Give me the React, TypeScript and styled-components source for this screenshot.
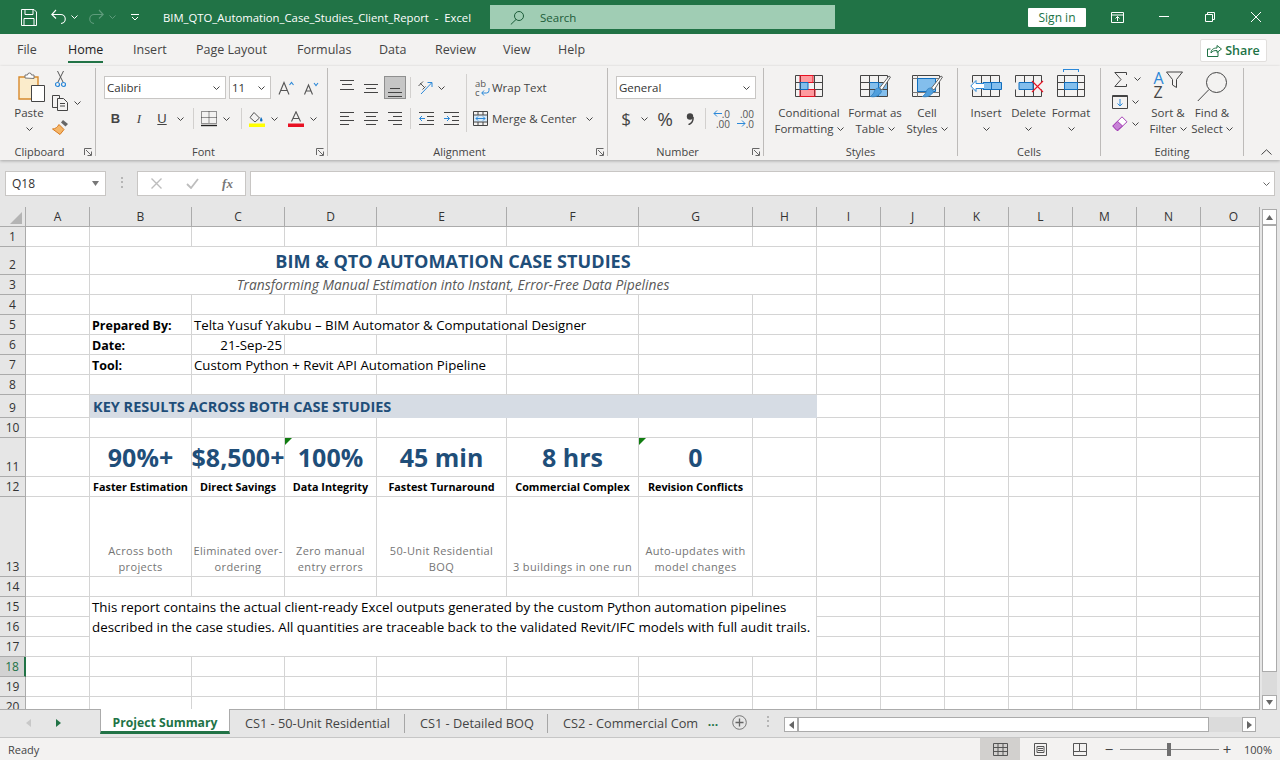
import React from "react";
import styled, { createGlobalStyle } from "styled-components";

const GlobalStyle = createGlobalStyle`
  html, body { margin: 0; padding: 0; background: #e6e6e6; }
  * { box-sizing: border-box; }
  #root { width: 1280px; height: 760px; overflow: hidden; }
`;

const uiFont = `"Open Sans", "Noto Sans", Arial, sans-serif`;

const Page = styled.div`
  width: 1280px;
  height: 760px;
  display: flex;
  flex-direction: column;
  font-family: ${uiFont};
  font-size: 11.5px;
  color: #444;
`;

// ---- title bar
const TitleBar = styled.div`
  height: 34px;
  background: #217346;
  display: flex;
  align-items: center;
  color: #fff;
`;
const QuickSlot = styled.div<{ $w: number; $ml?: number }>`
  width: ${(p) => p.$w}px;
  margin-left: ${(p) => p.$ml || 0}px;
  display: flex;
  justify-content: center;
  align-items: center;
  flex: none;
`;
const DocTitle = styled.div`
  width: 327px;
  margin-left: 24px;
  font-size: 11.3px;
  white-space: pre;
`;
const SearchBox = styled.div`
  width: 345px;
  height: 24px;
  background: #a0cdb4;
  display: flex;
  align-items: center;
  padding-left: 20px;
  gap: 15px;
  color: #1c5c39;
  font-size: 11.5px;
`;
const SignIn = styled.div`
  width: 58px;
  height: 19px;
  margin-left: 193px;
  background: #fff;
  color: #217346;
  border-radius: 1px;
  text-align: center;
  line-height: 19px;
  font-size: 12px;
`;

// ---- ribbon tabs
const TabRow = styled.div`
  height: 32px;
  background: #f3f2f1;
  display: flex;
  align-items: center;
  padding-left: 17px;
`;
const RibbonTab = styled.div<{ $w: number; $active?: boolean }>`
  width: ${(p) => p.$w}px;
  flex: none;
  font-size: 12.5px;
  line-height: 32px;
  span {
    display: inline-block;
    position: relative;
    color: ${(p) => (p.$active ? "#222" : "#444")};
  }
  span::after {
    content: "";
    display: ${(p) => (p.$active ? "block" : "none")};
    position: absolute;
    left: 0;
    right: 0;
    bottom: 3px;
    height: 2px;
    background: #217346;
  }
`;
const ShareButton = styled.div`
  margin-left: auto;
  margin-right: 13px;
  width: 67px;
  height: 23px;
  background: #fff;
  border: 1px solid #e1dfdd;
  border-radius: 2px;
  color: #217346;
  font-size: 12.5px;
  font-weight: 600;
  display: flex;
  align-items: center;
  justify-content: center;
  gap: 3px;
`;

// ---- ribbon
const Ribbon = styled.div`
  height: 94px;
  background: #f3f2f1;
  display: flex;
  box-shadow: 0 1px 3px rgba(0, 0, 0, 0.28);
  position: relative;
  z-index: 2;
`;
const Group = styled.div<{ $w: number }>`
  width: ${(p) => p.$w}px;
  flex: none;
  height: 88px;
  margin-top: 2px;
  border-right: 1px solid #bdbbb9;
  position: relative;
`;
const GroupBody = styled.div`
  height: 74px;
  display: flex;
`;
const GroupLabel = styled.div<{ $launcher?: boolean }>`
  height: 14px;
  line-height: 19px;
  text-align: center;
  font-size: 11px;
  color: #444;
  padding-right: ${(p) => (p.$launcher ? 16 : 0)}px;
`;
const Launcher = styled.div`
  position: absolute;
  right: 3px;
  bottom: 0;
  width: 8px;
  height: 8px;
  display: flex;
`;
const Stack = styled.div<{ $w?: number; $ml?: number; $pt?: number; $gap?: number }>`
  width: ${(p) => (p.$w ? `${p.$w}px` : "auto")};
  margin-left: ${(p) => p.$ml || 0}px;
  padding-top: ${(p) => p.$pt ?? 8}px;
  display: flex;
  flex-direction: column;
  gap: ${(p) => p.$gap ?? 9}px;
  flex: none;
`;
const ToolRow = styled.div<{ $h?: number }>`
  height: ${(p) => p.$h || 23}px;
  display: flex;
  align-items: center;
`;
const Slot = styled.div<{ $w: number; $ml?: number }>`
  width: ${(p) => p.$w}px;
  margin-left: ${(p) => p.$ml || 0}px;
  height: 100%;
  flex: none;
  display: flex;
  align-items: center;
  justify-content: center;
`;
const SelectedSlot = styled(Slot)`
  background: #c6c6c6;
  border: 1px solid #8f8f8f;
`;
const ToolSep = styled.div<{ $w: number; $h?: number }>`
  width: ${(p) => p.$w}px;
  height: ${(p) => p.$h || 21}px;
  flex: none;
  position: relative;
  &::after {
    content: "";
    position: absolute;
    left: 50%;
    top: 0;
    bottom: 0;
    width: 1px;
    background: #d2d0ce;
  }
`;
const Combo = styled.div<{ $w: number; $ml?: number }>`
  width: ${(p) => p.$w}px;
  margin-left: ${(p) => p.$ml || 0}px;
  height: 23px;
  background: #fff;
  border: 1px solid #c8c6c4;
  display: flex;
  align-items: center;
  justify-content: space-between;
  padding: 0 5px 0 2px;
  font-size: 11.5px;
  color: #333;
  flex: none;
`;
const ToolText = styled.span<{ $ml?: number }>`
  margin-left: ${(p) => p.$ml || 0}px;
  white-space: nowrap;
  font-size: 11.5px;
`;
const Big = styled.div<{ $w: number; $ml?: number }>`
  width: ${(p) => p.$w}px;
  margin-left: ${(p) => p.$ml || 0}px;
  flex: none;
  display: flex;
  flex-direction: column;
  align-items: center;
`;
const BigIcon = styled.div<{ $pb?: number; $pl?: number }>`
  height: 37px;
  padding-bottom: ${(p) => p.$pb ?? 8}px;
  padding-left: ${(p) => p.$pl ?? 0}px;
  display: flex;
  align-items: flex-end;
`;
const BigText = styled.div`
  line-height: 16px;
  font-size: 11.5px;
  text-align: center;
  white-space: nowrap;
  display: flex;
  align-items: center;
  justify-content: center;
  gap: 3px;
  height: 16px;
`;
const CollapseSlot = styled.div`
  flex: 1;
  display: flex;
  align-items: flex-end;
  justify-content: flex-end;
  padding: 0 8px 5px 0;
`;

// ---- formula bar
const FormulaBar = styled.div`
  height: 47px;
  background: #e6e6e6;
  padding: 11px 0 0 5px;
  display: flex;
  align-items: flex-start;
`;
const NameBox = styled.div`
  width: 101px;
  height: 25px;
  background: #fff;
  border: 1px solid #c8c6c4;
  display: flex;
  align-items: center;
  justify-content: space-between;
  padding: 0 6px;
  font-size: 12px;
  color: #333;
`;
const GripDots = styled.div<{ $ml: number; $mr: number }>`
  margin: 6px ${(p) => p.$mr}px 0 ${(p) => p.$ml}px;
  width: 2px;
  height: 11px;
  background: repeating-linear-gradient(#b5b5b5 0 2px, transparent 2px 4.5px);
  flex: none;
`;
const FxBox = styled.div`
  width: 109px;
  height: 25px;
  background: #fff;
  border: 1px solid #c8c6c4;
  display: flex;
  align-items: center;
`;
const FxText = styled.span`
  width: 37px;
  text-align: center;
  font-family: "Liberation Serif", serif;
  font-style: italic;
  font-weight: 700;
  font-size: 13px;
  color: #777;
`;
const FormulaInput = styled.div`
  width: 1025px;
  height: 25px;
  margin-left: 4px;
  background: #fff;
  border: 1px solid #c8c6c4;
  display: flex;
  align-items: center;
  justify-content: flex-end;
  padding-right: 4px;
`;

// ---- sheet
const SheetArea = styled.div`
  height: 503px;
  display: flex;
  background: #e6e6e6;
`;
const SheetGrid = styled.div`
  width: 1260px;
  height: 503px;
  overflow: hidden;
  display: grid;
  grid-template-columns: 26px 64px 102px 93px 92px 130px 132px 114px 64px 64px 64px 64px 64px 64px 64px 66px;
  grid-template-rows: 20px 20px 28px 20px 20px 20px 20px 20px 20px 23px 20px 39px 20px 80px 20px 20px 20px 20px 20px 20px 20px;
  background: #fff;
  border-right: 1px solid #ababab;
  border-bottom: 1px solid #ababab;
  font-family: "Open Sans", "Noto Sans", sans-serif;
`;
const Cell = styled.div<{ $span?: number; $rows?: number }>`
  grid-column: span ${(p) => p.$span || 1};
  grid-row: span ${(p) => p.$rows || 1};
  border-right: 1px solid #d4d4d4;
  border-bottom: 1px solid #d4d4d4;
  position: relative;
  min-width: 0;
  font-size: 12.5px;
  color: #000;
  white-space: nowrap;
  overflow: hidden;
  display: flex;
`;
const CornerCell = styled(Cell)`
  background: #e6e6e6;
  border-right: 1px solid #ababab;
  border-bottom: 1px solid #ababab;
  align-items: flex-end;
  justify-content: flex-end;
  padding: 0 3px 2px 0;
`;
const ColHead = styled(Cell)`
  background: #e6e6e6;
  border-right: 1px solid #ababab;
  border-bottom: 1px solid #ababab;
  font-size: 12px;
  color: #333;
  justify-content: center;
  align-items: center;
`;
const RowHead = styled(Cell)<{ $selected?: boolean }>`
  background: ${(p) => (p.$selected ? "#d2d2d2" : "#e6e6e6")};
  border-right: ${(p) => (p.$selected ? "2px solid #217346" : "1px solid #ababab")};
  border-bottom: 1px solid #ababab;
  font-size: 12px;
  color: ${(p) => (p.$selected ? "#217346" : "#333")};
  justify-content: center;
  align-items: flex-end;
  padding-bottom: 1px;
`;
const TitleCell = styled(Cell)`
  font-size: 18.1px;
  font-weight: 700;
  color: #1f4e79;
  justify-content: center;
  align-items: center;
`;
const SubtitleCell = styled(Cell)`
  font-size: 13.8px;
  font-style: italic;
  color: #595959;
  justify-content: center;
  align-items: center;
`;
const LabelCell = styled(Cell)`
  font-weight: 700;
  align-items: flex-end;
  padding: 0 0 0 2px;
`;
const ValueCell = styled(Cell)`
  font-size: 13.25px;
  align-items: flex-end;
  padding: 0 0 0 2px;
`;
const DateCell = styled(ValueCell)`
  justify-content: flex-end;
  padding-right: 2px;
`;
const BandCell = styled(Cell)`
  background: #d6dce4;
  color: #1f4e79;
  font-weight: 700;
  font-size: 14.5px;
  align-items: center;
  padding-left: 3px;
  border-right: none;
  border-bottom: none;
`;
const KpiCell = styled(Cell)`
  font-size: 25px;
  font-weight: 700;
  color: #1f4e79;
  justify-content: center;
  align-items: center;
`;
const KpiLabel = styled(Cell)`
  font-size: 10.8px;
  font-weight: 700;
  justify-content: center;
  align-items: center;
`;
const KpiNote = styled(Cell)`
  font-size: 11px;
  letter-spacing: 0.35px;
  color: #757575;
  white-space: normal;
  text-align: center;
  line-height: 16px;
  justify-content: center;
  align-items: flex-end;
  padding: 0 0 1px;
`;
const NoteCell = styled(Cell)`
  display: block;
  padding: 0 0 0 2px;
  line-height: 20px;
  font-size: 13.35px;
`;
const ErrorMark = styled.i`
  position: absolute;
  left: 0;
  top: 0;
  width: 0;
  height: 0;
  border-top: 7px solid #107c10;
  border-right: 7px solid transparent;
`;

// ---- vertical scrollbar
const VScroll = styled.div`
  width: 20px;
  height: 503px;
  padding: 2px 3px 0 2px;
  display: flex;
  flex-direction: column;
  background: #e6e6e6;
`;
const ScrollArrow = styled.div<{ $h?: number }>`
  height: ${(p) => p.$h || 16}px;
  width: 100%;
  background: #fff;
  border: 1px solid #ababab;
  display: flex;
  align-items: center;
  justify-content: center;
  flex: none;
`;
const VThumb = styled.div`
  height: 447px;
  background: #fff;
  border: 1px solid #ababab;
  flex: none;
`;
const VTrack = styled.div`
  height: 23px;
  background: #dbdbdb;
  flex: none;
`;

// ---- sheet tabs
const TabBar = styled.div`
  height: 28px;
  background: #e6e6e6;
  border-bottom: 1px solid #c6c6c6;
  display: flex;
  align-items: flex-start;
`;
const TabNav = styled.div`
  width: 100px;
  height: 26px;
  flex: none;
  display: flex;
  align-items: center;
  padding-left: 26px;
  gap: 25px;
`;
const ActiveSheetTab = styled.div`
  width: 130px;
  height: 25px;
  flex: none;
  margin-top: -1px;
  background: #fff;
  border-left: 1px solid #ababab;
  border-right: 1px solid #ababab;
  border-bottom: 3px solid #217346;
  color: #217346;
  font-weight: 700;
  font-size: 12.2px;
  text-align: center;
  line-height: 27px;
`;
const SheetTab = styled.div<{ $w: number; $sep?: boolean }>`
  width: ${(p) => p.$w}px;
  height: 19px;
  margin-top: 4px;
  flex: none;
  font-size: 12.75px;
  line-height: 19px;
  padding-left: 15px;
  overflow: hidden;
  white-space: nowrap;
  color: #444;
  border-right: ${(p) => (p.$sep ? "1px solid #a6a6a6" : "none")};
`;
const MoreTabs = styled.div`
  width: 20px;
  margin-top: 3px;
  color: #217346;
  font-weight: 700;
  text-align: center;
  font-size: 12px;
  flex: none;
`;
const AddTab = styled.div`
  margin: 5px 0 0 9px;
  flex: none;
  display: flex;
`;
const HScroll = styled.div`
  width: 472px;
  height: 15px;
  margin: 7px 0 0 15px;
  display: flex;
  background: #dbdbdb;
  flex: none;
`;
const HArrow = styled.div<{ $w: number }>`
  width: ${(p) => p.$w}px;
  background: #fff;
  border: 1px solid #ababab;
  display: flex;
  align-items: center;
  justify-content: center;
  flex: none;
`;
const HThumb = styled.div`
  width: 411px;
  background: #fff;
  border: 1px solid #ababab;
  flex: none;
`;
const HTrack = styled.div`
  flex: 1;
`;

// ---- status bar
const StatusBar = styled.div`
  height: 22px;
  background: #f3f2f1;
  display: flex;
  align-items: center;
  padding-left: 8px;
  font-size: 11px;
  color: #444;
`;
const ViewButton = styled.div<{ $on?: boolean }>`
  width: 40px;
  height: 22px;
  background: ${(p) => (p.$on ? "#d2d0ce" : "transparent")};
  display: flex;
  align-items: center;
  justify-content: center;
  flex: none;
  &:first-of-type {
    margin-left: auto;
  }
`;
const ZoomTrack = styled.div`
  width: 99px;
  height: 1px;
  background: #8a8a8a;
  margin: 0 3px 0 6px;
  position: relative;
  flex: none;
`;
const ZoomThumb = styled.div`
  position: absolute;
  left: 47px;
  top: -6px;
  width: 4px;
  height: 13px;
  background: #6f6f6f;
`;
const ZoomSign = styled.span<{ $ml?: number }>`
  font-size: 15px;
  color: #444;
  width: 10px;
  margin-left: ${(p) => p.$ml || 0}px;
  text-align: center;
  flex: none;
`;
const ZoomValue = styled.span`
  width: 28px;
  text-align: right;
  margin: 0 8px 0 12px;
  flex: none;
`;

// ---- icons
type IconProps = { w: number; h: number; children: React.ReactNode };
const Svg = ({ w, h, children }: IconProps) => (
  <svg width={w} height={h} viewBox={`0 0 ${w} ${h}`} fill="none" style={{ display: "block", flex: "none" }}>
    {children}
  </svg>
);
const INK = "#444";
const BLUE = "#2b88d8";
const SOFT = "#83beec";
const DEEP = "#106ebe";

const Chev = ({ color = "#444" }: { color?: string }) => (
  <Svg w={7} h={4}>
    <path d="M.5.5 3.500 3.500 6.500.5" stroke={color} />
  </Svg>
);
const SaveIcon = () => (
  <Svg w={16} h={17}>
    <path d="M.5.5h12.500l2.500 2.500v13.500H.5z M4 .5v5h8v-5 M3 16.500v-7h10v7" stroke="#fff" />
  </Svg>
);
const UndoIcon = ({ color, flip }: { color: string; flip?: boolean }) => (
  <svg width={15} height={16} viewBox="0 0 15 16" fill="none" style={{ display: "block", transform: flip ? "scaleX(-1)" : "none" }}>
    <path d="M1 5.500h8.500a4.500 4.500 0 0 1 .5 9 M5 1 .8 5.500 5 9.500" stroke={color} strokeWidth="1.1" />
  </svg>
);
const CustomizeIcon = () => (
  <Svg w={8} h={7}>
    <path d="M0 .5h8 M1 3l3 3 3-3" stroke="#fff" />
  </Svg>
);
const SearchIcon = () => (
  <Svg w={15} h={15}>
    <circle cx="9" cy="6" r="4.500" stroke="#1c5c39" />
    <path d="M6 9.500.8 14.500" stroke="#1c5c39" />
  </Svg>
);
const DisplayIcon = () => (
  <Svg w={13} h={11}>
    <path d="M.5.500h12v10H.5z M.5 3h12" stroke="#fff" />
    <path d="M6.500 9V4.500 M4.500 6.500l2-2 2 2" stroke="#fff" />
  </Svg>
);
const MinIcon = () => (
  <Svg w={10} h={2}>
    <path d="M0 .5h10" stroke="#fff" />
  </Svg>
);
const RestoreIcon = () => (
  <Svg w={10} h={10}>
    <path d="M.5 2.500h7v7h-7z M2.500 2.500v-2h7v7h-2" stroke="#fff" />
  </Svg>
);
const CloseIcon = () => (
  <Svg w={10} h={10}>
    <path d="M0 0l10 10M10 0 0 10" stroke="#fff" />
  </Svg>
);
const ShareIcon = () => (
  <Svg w={15} h={13}>
    <path d="M11 7.500v5H.5V5h3" stroke="#217346" />
    <path d="M4 9c0-3 2-5 6-5V1.500L14.500 5 10 8.500V6.500C7 6.500 5.500 7 4 9z" stroke="#217346" />
  </Svg>
);
const LaunchIcon = () => (
  <Svg w={8} h={8}>
    <path d="M.5 7V.5H7.500 M2 2l5 5 M7.500 3.500v4h-4" stroke="#666" />
  </Svg>
);
const PasteIcon = () => (
  <Svg w={28} h={30}>
    <path d="M1 5h19v22H1z" fill="#fbeccb" stroke="#d88a2d" strokeWidth="1.4" />
    <path d="M7 6V3h2.500a2 2 0 0 1 4 0H16v3.500z" fill="#fff" stroke="#777" />
    <path d="M13.500 13.500h13v16h-13z" fill="#fff" stroke={INK} />
  </Svg>
);
const CutIcon = () => (
  <Svg w={11} h={17}>
    <path d="M3 11 8.500 0 M8 11 2.500 0" stroke="#555" />
    <circle cx="2.500" cy="13.500" r="2" stroke={BLUE} strokeWidth="1.2" />
    <circle cx="8.500" cy="13.500" r="2" stroke={BLUE} strokeWidth="1.2" />
  </Svg>
);
const CopyIcon = () => (
  <Svg w={16} h={16}>
    <path d="M5 12.500H.5V.5h7v3" stroke={INK} />
    <path d="M5.500 3.500h6l4 4v8h-10z M8 8.500h5 M8 11h5" stroke={INK} />
  </Svg>
);
const PainterIcon = () => (
  <Svg w={17} h={16}>
    <path d="M11 1l5 4-2.500 2.500-4.500-4z" fill="#666" />
    <path d="M7 5.500l5 5-4 5-7.500-5.500c3 0 5-2 6.500-4.500z" fill="#f5b668" stroke="#d87a1e" />
  </Svg>
);
const GrowIcon = ({ up }: { up: boolean }) => (
  <Svg w={16} h={14}>
    <path d={up ? "M1 13.500 6 1.500l5 12 M3 9.500h6" : "M1.500 13.500 5.500 4l4 9.500 M3 10h5"} stroke="#555" strokeWidth="1.1" />
    <path d={up ? "M11.500 4 13.500 1.500 15.500 4" : "M11 2 13 4.500 15 2"} stroke={BLUE} strokeWidth="1.1" />
  </Svg>
);
const BoldMark = styled.span`
  font-family: "Liberation Sans", sans-serif;
  font-weight: 700;
  font-size: 13px;
  color: #444;
`;
const ItalicMark = styled(BoldMark)`
  font-family: "Liberation Serif", serif;
  font-style: italic;
  font-weight: 400;
`;
const UnderMark = styled(BoldMark)`
  font-weight: 400;
  text-decoration: underline;
`;
const BorderIcon = () => (
  <Svg w={16} h={16}>
    <path d="M.5.500h15v12h-15z M8 .5v12 M.5 6.500h15" stroke="#333" strokeDasharray="1 1" />
    <path d="M0 14.500h16" stroke="#222" strokeWidth="1.400" />
  </Svg>
);
const FillIcon = () => (
  <Svg w={16} h={16}>
    <path d="M5 1.500 10.500 7 6 11 1 6.500z" stroke="#555" />
    <path d="M12 6c1 1.500 1.500 2.500 1.500 3.300a1.200 1.200 0 0 1-2.500 0C11 8.500 11.500 7.500 12 6z" fill={DEEP} />
    <path d="M0 12.500h16v3.500H0z" fill="#ffff00" />
  </Svg>
);
const FontColorIcon = () => (
  <Svg w={16} h={16}>
    <path d="M3.500 10.500 8 .8l4.500 9.700 M5 7.500h6" stroke="#555" strokeWidth="1.100" />
    <path d="M0 12.500h16v3.500H0z" fill="#e81123" />
  </Svg>
);
const Lines = ({ rows, h = 14 }: { rows: [number, number, number][]; h?: number }) => (
  <Svg w={15} h={h}>
    {rows.map(([x, y, l], i) => (
      <path key={i} d={`M${x} ${y + 0.5}h${l}`} stroke="#444" />
    ))}
  </Svg>
);
const OrientIcon = () => (
  <Svg w={15} h={15}>
    <path d="M3 14 13.500 3 M9.500 2.500h4.500V7" stroke={BLUE} />
    <path d="M.5 6 5 1.500 M2 3 6 7 M4.500 9.500l3-3" stroke="#555" />
  </Svg>
);
const IndentIcon = ({ dir }: { dir: "out" | "in" }) => (
  <Svg w={15} h={13}>
    <path d="M0 .5h15 M8 4.500h7 M8 8.500h7 M0 12.500h15" stroke="#444" />
    <path d={dir === "out" ? "M6 6.500H.5 M3 4 .5 6.500 3 9" : "M0 6.500h5.500 M3 4l2.500 2.500L3 9"} stroke={BLUE} />
  </Svg>
);
const AbLetter = styled.span`
  font-size: 9.5px;
  line-height: 9px;
  color: #555;
`;
const WrapBox = styled.div`
  width: 15px;
  height: 18px;
  position: relative;
  display: flex;
  flex-direction: column;
`;
const WrapArrow = styled.div`
  position: absolute;
  right: 0;
  bottom: 1px;
`;
const WrapIcon = () => (
  <WrapBox>
    <AbLetter>ab</AbLetter>
    <AbLetter>c</AbLetter>
    <WrapArrow>
      <Svg w={9} h={8}>
        <path d="M8 0v2.500a2.500 2.500 0 0 1-2.500 2.500H.8 M3 2.500.8 5 3 7.500" stroke={BLUE} />
      </Svg>
    </WrapArrow>
  </WrapBox>
);
const MergeIcon = () => (
  <Svg w={15} h={15}>
    <path d="M.5 4h14v7H.5z" fill="#d6eafa" />
    <path d="M.5.500h14v14H.5z M.5 4h14 M.5 11h14 M5 .5V4 M10 .5V4 M5 11v3.500 M10 11v3.500" stroke="#444" />
    <path d="M3 7.500h9 M5 5.500l-2 2 2 2 M10 5.500l2 2-2 2" stroke={BLUE} />
  </Svg>
);
const DollarMark = styled.span`
  font-size: 17px;
  color: #444;
  line-height: 20px;
`;
const PercentMark = styled.span`
  font-size: 19px;
  color: #444;
  line-height: 20px;
`;
const CommaIcon = () => (
  <Svg w={8} h={12}>
    <circle cx="4" cy="3.500" r="3.200" fill="#444" />
    <path d="M7 4c.4 3.500-1.500 6.500-4.500 7.700" stroke="#444" strokeWidth="1.500" />
  </Svg>
);
const DecimalBox = styled.div`
  width: 17px;
  height: 20px;
  position: relative;
  font-size: 10px;
  line-height: 10px;
  color: #555;
  text-align: right;
`;
const DecimalArrow = styled.div<{ $top: number }>`
  position: absolute;
  left: 0;
  top: ${(p) => p.$top}px;
`;
const LeftArrow = () => (
  <Svg w={9} h={7}>
    <path d="M9 3.500H1 M4 .5l-3 3 3 3" stroke={BLUE} />
  </Svg>
);
const RightArrow = () => (
  <Svg w={9} h={7}>
    <path d="M0 3.500h8 M5 .5l3 3-3 3" stroke={BLUE} />
  </Svg>
);
const CondIcon = () => (
  <Svg w={28} h={22}>
    <path d="M5 .5h13v7H5z" fill="#ff9a9e" />
    <path d="M5 7.500h8v7H5z" fill={SOFT} />
    <path d="M5 14.500h15v7H5z" fill="#ff9a9e" />
    <path d="M.5.500h27v21H.5z M.5 7.500h27 M.5 14.500h27 M5.500 .5v21 M19.500 .5v21" stroke={INK} />
    <path d="M5 .5h13v7H5z M5 14.500h15v7H5z" stroke="#e81123" />
    <path d="M5 7.500h8v7H5z" stroke={DEEP} />
  </Svg>
);
const Brush = () => (
  <>
    <path d="M30.500 2 29 1 19.500 13 22 15z" fill="#fff" stroke="#666" />
    <path d="M19 13c-2 0-4 1-4.500 3-.5 2-2 4-4 5.500 5 1 9-1 11-5z" fill="#4f9fdd" stroke="#3a86c4" />
  </>
);
const FormatTableIcon = () => (
  <Svg w={31} h={24}>
    <path d="M9 7h18v14H9z" fill={SOFT} />
    <path d="M.5.500h27v21H.5z M.5 7.500h27 M.5 14.500h27 M9.500 .5v21 M18.500 .5v21" stroke={INK} />
    <path d="M9.500 7.500h9v14" stroke={DEEP} />
    <Brush />
  </Svg>
);
const CellStyleIcon = () => (
  <Svg w={31} h={24}>
    <path d="M5 3h18v13H5z" fill={SOFT} />
    <path d="M.5.500h27v21H.5z" stroke={INK} />
    <path d="M.5 3.500h27 M.5 17.500h27 M5.500 .5v21" stroke="#777" />
    <path d="M5.500 3.500h18v13h-18z" stroke={DEEP} />
    <Brush />
  </Svg>
);
const InsertIcon = () => (
  <Svg w={32} h={22}>
    <path d="M2.500.5h27 M2.500 21.500h27 M2.500.5v7 M2.500 14.500v7 M11.500 .5v21 M20.500 .5v21 M29.500 .5v7 M29.500 14.500v7" stroke={INK} />
    <path d="M13 7.500h18.500v7H13z" fill={SOFT} stroke={DEEP} />
    <path d="M21.500 7.500v7" stroke={DEEP} />
    <path d="M14 8.500H6V5.500L.8 11 6 16.500v-3h8" fill="#fff" stroke={BLUE} />
  </Svg>
);
const DeleteIcon = () => (
  <Svg w={30} h={22}>
    <path d="M1.500.5h26 M1.500 21.500h26 M1.500.5v7 M1.500 14.500v7 M10.500 .5v21 M19.500 .5v21 M27.500 .5v7 M27.500 14.500v7" stroke={INK} />
    <path d="M5 7.500h14v7H5z" fill={SOFT} stroke={DEEP} />
    <path d="M18 6l11 11 M29 6 18 17" stroke="#e81123" strokeWidth="1.100" />
  </Svg>
);
const FormatCellsIcon = () => (
  <Svg w={28} h={28}>
    <path d="M6 .5h16 M6.500 0v3 M21.500 0v3" stroke={BLUE} />
    <path d="M.5 6.500h27v21H.5z M.5 13.500h27 M.5 20.500h27 M7.500 6.500v21 M20.500 6.500v21" stroke={INK} />
    <path d="M7.500 13.500h13v7h-13z" fill={SOFT} stroke={DEEP} />
  </Svg>
);
const SigmaIcon = () => (
  <Svg w={13} h={15}>
    <path d="M12.500 3V.5H.8L7 7.500.8 14.500h11.700V12" stroke="#444" />
  </Svg>
);
const FillDownIcon = () => (
  <Svg w={16} h={14}>
    <path d="M.5.500h15v13H.5z" stroke="#444" />
    <path d="M.5 1.500h15" stroke="#444" />
    <path d="M8 4v7 M5.500 8.500 8 11l2.500-2.500" stroke={BLUE} />
  </Svg>
);
const EraserIcon = () => (
  <Svg w={16} h={15}>
    <path d="M5 14.500.8 10 10 .8l5 5-9 8.700z" fill="#fff" stroke="#a33fb5" />
    <path d="M5 14.500.8 10l4.700-4.700 5 4.700z" fill="#c782d6" stroke="#a33fb5" />
  </Svg>
);
const SortLetter = styled.span<{ $blue?: boolean }>`
  font-size: 16px;
  line-height: 14px;
  display: block;
  color: ${(p) => (p.$blue ? BLUE : "#444")};
`;
const SortBox = styled.div`
  display: flex;
  align-items: flex-start;
  gap: 2px;
`;
const FunnelIcon = () => (
  <Svg w={17} h={17}>
    <path d="M.5 1h16l-6 7.500v8l-4-2.500V8.500z" stroke="#444" />
  </Svg>
);
const FindIcon = () => (
  <Svg w={30} h={30}>
    <circle cx="19.500" cy="10.500" r="10" stroke="#444" />
    <path d="M12 17.500.8 29" stroke="#444" />
  </Svg>
);
const Triangle = ({ dir, color = "#666" }: { dir: "up" | "down" | "left" | "right"; color?: string }) => {
  const points = { up: "0,5 7,5 3.500,0", down: "0,0 7,0 3.500,5", left: "5,0 5,8 0,4", right: "0,0 0,8 5,4" }[dir];
  const wide = dir === "up" || dir === "down";
  return (
    <Svg w={wide ? 7 : 5} h={wide ? 5 : 8}>
      <polygon points={points} fill={color} />
    </Svg>
  );
};
const GridViewIcon = () => (
  <Svg w={15} h={13}>
    <path d="M.5.500h14v12H.5z M.5 4.500h14 M.5 8.500h14 M5 .5v12 M10 .5v12" stroke="#555" />
  </Svg>
);
const PageViewIcon = () => (
  <Svg w={13} h={13}>
    <path d="M.5.500h12v12H.5z" stroke="#555" />
    <path d="M3 3.500h7v6H3z M4 5.500h5 M4 7.500h5" stroke="#555" />
  </Svg>
);
const BreakViewIcon = () => (
  <Svg w={14} h={13}>
    <path d="M.5.500h13v12H.5z M.5 8.500h6v-8 M6.500 8.500h7" stroke="#555" />
  </Svg>
);
const PlusIcon = () => (
  <Svg w={15} h={15}>
    <circle cx="7.500" cy="7.500" r="6.800" stroke="#777" />
    <path d="M7.500 3.500v8 M3.500 7.500h8" stroke="#666" strokeWidth="1.300" />
  </Svg>
);

// ---- sheet data
const colNames = ["A", "B", "C", "D", "E", "F", "G", "H", "I", "J", "K", "L", "M", "N", "O"];
const blanks = (n: number, prefix: string) =>
  Array.from({ length: n }, (_, i) => <Cell key={`${prefix}-${i}`} />);

const kpis = [
  { value: "90%+", label: "Faster Estimation", note: "Across both projects" },
  { value: "$8,500+", label: "Direct Savings", note: "Eliminated over-ordering" },
  { value: "100%", label: "Data Integrity", note: "Zero manual entry errors", flagged: true },
  { value: "45 min", label: "Fastest Turnaround", note: "50-Unit Residential BOQ" },
  { value: "8 hrs", label: "Commercial Complex", note: "3 buildings in one run" },
  { value: "0", label: "Revision Conflicts", note: "Auto-updates with model changes", flagged: true },
];

const Sheet = () => (
  <SheetGrid>
    <CornerCell>
      <Svg w={12} h={12}>
        <polygon points="12,0 12,12 0,12" fill="#b4b4b4" />
      </Svg>
    </CornerCell>
    {colNames.map((c) => (
      <ColHead key={c}>{c}</ColHead>
    ))}

    <RowHead>1</RowHead>
    {blanks(15, "r1")}

    <RowHead>2</RowHead>
    <Cell />
    <TitleCell $span={7}>BIM &amp; QTO AUTOMATION CASE STUDIES</TitleCell>
    {blanks(7, "r2")}

    <RowHead>3</RowHead>
    <Cell />
    <SubtitleCell $span={7}>Transforming Manual Estimation into Instant, Error-Free Data Pipelines</SubtitleCell>
    {blanks(7, "r3")}

    <RowHead>4</RowHead>
    {blanks(15, "r4")}

    <RowHead>5</RowHead>
    <Cell />
    <LabelCell>Prepared By:</LabelCell>
    <ValueCell $span={4}>Telta Yusuf Yakubu – BIM Automator &amp; Computational Designer</ValueCell>
    {blanks(9, "r5")}

    <RowHead>6</RowHead>
    <Cell />
    <LabelCell>Date:</LabelCell>
    <DateCell>21-Sep-25</DateCell>
    {blanks(12, "r6")}

    <RowHead>7</RowHead>
    <Cell />
    <LabelCell>Tool:</LabelCell>
    <ValueCell $span={3}>Custom Python + Revit API Automation Pipeline</ValueCell>
    {blanks(10, "r7")}

    <RowHead>8</RowHead>
    {blanks(15, "r8")}

    <RowHead>9</RowHead>
    <Cell />
    <BandCell $span={7}>KEY RESULTS ACROSS BOTH CASE STUDIES</BandCell>
    {blanks(7, "r9")}

    <RowHead>10</RowHead>
    {blanks(15, "r10")}

    <RowHead>11</RowHead>
    <Cell />
    {kpis.map((k) => (
      <KpiCell key={k.label}>
        {k.flagged && <ErrorMark />}
        {k.value}
      </KpiCell>
    ))}
    {blanks(8, "r11")}

    <RowHead>12</RowHead>
    <Cell />
    {kpis.map((k) => (
      <KpiLabel key={k.label}>{k.label}</KpiLabel>
    ))}
    {blanks(8, "r12")}

    <RowHead>13</RowHead>
    <Cell />
    {kpis.map((k) => (
      <KpiNote key={k.label}>{k.note}</KpiNote>
    ))}
    {blanks(8, "r13")}

    <RowHead>14</RowHead>
    {blanks(15, "r14")}

    <RowHead>15</RowHead>
    <Cell />
    <NoteCell $span={7} $rows={3}>
      This report contains the actual client-ready Excel outputs generated by the custom Python automation pipelines
      <br />
      described in the case studies. All quantities are traceable back to the validated Revit/IFC models with full audit trails.
    </NoteCell>
    {blanks(7, "r15")}

    <RowHead>16</RowHead>
    <Cell />
    {blanks(7, "r16")}

    <RowHead>17</RowHead>
    <Cell />
    {blanks(7, "r17")}

    <RowHead $selected>18</RowHead>
    {blanks(15, "r18")}

    <RowHead>19</RowHead>
    {blanks(15, "r19")}

    <RowHead>20</RowHead>
    {blanks(15, "r20")}
  </SheetGrid>
);

const App = () => (
  <Page>
    <GlobalStyle />
    <TitleBar>
      <QuickSlot $w={16} $ml={21}>
        <SaveIcon />
      </QuickSlot>
      <QuickSlot $w={15} $ml={14}>
        <UndoIcon color="#fff" />
      </QuickSlot>
      <QuickSlot $w={10} $ml={3}>
        <Chev color="#fff" />
      </QuickSlot>
      <QuickSlot $w={15} $ml={10}>
        <UndoIcon color="#5f9c7c" flip />
      </QuickSlot>
      <QuickSlot $w={10} $ml={3}>
        <Chev color="#5f9c7c" />
      </QuickSlot>
      <QuickSlot $w={8} $ml={14}>
        <CustomizeIcon />
      </QuickSlot>
      <DocTitle>{"BIM_QTO_Automation_Case_Studies_Client_Report  -  Excel"}</DocTitle>
      <SearchBox>
        <SearchIcon />
        <span>Search</span>
      </SearchBox>
      <SignIn>Sign in</SignIn>
      <QuickSlot $w={13} $ml={25}>
        <DisplayIcon />
      </QuickSlot>
      <QuickSlot $w={10} $ml={35}>
        <MinIcon />
      </QuickSlot>
      <QuickSlot $w={10} $ml={36}>
        <RestoreIcon />
      </QuickSlot>
      <QuickSlot $w={10} $ml={36}>
        <CloseIcon />
      </QuickSlot>
    </TitleBar>

    <TabRow>
      <RibbonTab $w={51}><span>File</span></RibbonTab>
      <RibbonTab $w={65} $active><span>Home</span></RibbonTab>
      <RibbonTab $w={63}><span>Insert</span></RibbonTab>
      <RibbonTab $w={101}><span>Page Layout</span></RibbonTab>
      <RibbonTab $w={82}><span>Formulas</span></RibbonTab>
      <RibbonTab $w={56}><span>Data</span></RibbonTab>
      <RibbonTab $w={68}><span>Review</span></RibbonTab>
      <RibbonTab $w={55}><span>View</span></RibbonTab>
      <RibbonTab $w={40}><span>Help</span></RibbonTab>
      <ShareButton>
        <ShareIcon />
        Share
      </ShareButton>
    </TabRow>

    <Ribbon>
      <Group $w={96}>
        <GroupBody>
          <Big $w={44} $ml={7}>
            <BigIcon $pb={3} $pl={6}>
              <PasteIcon />
            </BigIcon>
            <BigText>Paste</BigText>
            <BigText><Chev /></BigText>
          </Big>
          <Stack $pt={3} $gap={8}>
            <ToolRow $h={16}><Slot $w={16} $ml={1}><CutIcon /></Slot></ToolRow>
            <ToolRow $h={16}>
              <Slot $w={16} $ml={1}><CopyIcon /></Slot>
              <Slot $w={18}><Chev /></Slot>
            </ToolRow>
            <ToolRow $h={16}><Slot $w={17} $ml={1}><PainterIcon /></Slot></ToolRow>
          </Stack>
        </GroupBody>
        <GroupLabel $launcher>Clipboard</GroupLabel>
        <Launcher><LaunchIcon /></Launcher>
      </Group>

      <Group $w={232}>
        <GroupBody>
          <Stack $ml={8}>
            <ToolRow>
              <Combo $w={122}>Calibri<Chev /></Combo>
              <Combo $w={42} $ml={3}>11<Chev /></Combo>
              <Slot $w={16} $ml={7}><GrowIcon up /></Slot>
              <Slot $w={16} $ml={9}><GrowIcon up={false} /></Slot>
            </ToolRow>
            <ToolRow $h={21}>
              <Slot $w={23}><BoldMark>B</BoldMark></Slot>
              <Slot $w={24}><ItalicMark>I</ItalicMark></Slot>
              <Slot $w={22}><UnderMark>U</UnderMark></Slot>
              <Slot $w={14}><Chev /></Slot>
              <ToolSep $w={12} />
              <Slot $w={16} $ml={2}><BorderIcon /></Slot>
              <Slot $w={18}><Chev /></Slot>
              <ToolSep $w={12} />
              <Slot $w={16} $ml={2}><FillIcon /></Slot>
              <Slot $w={18}><Chev /></Slot>
              <Slot $w={16} $ml={5}><FontColorIcon /></Slot>
              <Slot $w={18}><Chev /></Slot>
            </ToolRow>
          </Stack>
        </GroupBody>
        <GroupLabel $launcher>Font</GroupLabel>
        <Launcher><LaunchIcon /></Launcher>
      </Group>

      <Group $w={280}>
        <GroupBody>
          <Stack $ml={8} $w={129}>
            <ToolRow>
              <Slot $w={22}><Lines h={18} rows={[[0, 1, 14], [2, 5, 10], [0, 10, 14]]} /></Slot>
              <Slot $w={26}><Lines h={18} rows={[[0, 5, 14], [2, 9, 10], [0, 13, 14]]} /></Slot>
              <SelectedSlot $w={22}><Lines h={18} rows={[[2, 9, 10], [0, 13, 14], [0, 17, 14]]} /></SelectedSlot>
              <ToolSep $w={8} />
              <Slot $w={22}><OrientIcon /></Slot>
              <Slot $w={10}><Chev /></Slot>
            </ToolRow>
            <ToolRow $h={21}>
              <Slot $w={24} $ml={-1}><Lines rows={[[0, 0, 14], [0, 4, 9], [0, 8, 14], [0, 12, 9]]} /></Slot>
              <Slot $w={24}><Lines rows={[[0, 0, 14], [2, 4, 10], [0, 8, 14], [2, 12, 10]]} /></Slot>
              <Slot $w={24}><Lines rows={[[0, 0, 14], [5, 4, 9], [0, 8, 14], [5, 12, 9]]} /></Slot>
              <ToolSep $w={6} />
              <Slot $w={22} $ml={2}><IndentIcon dir="out" /></Slot>
              <Slot $w={26} $ml={1}><IndentIcon dir="in" /></Slot>
            </ToolRow>
          </Stack>
          <Stack $pt={6} $gap={0}>
            <ToolSep $w={1} $h={58} />
          </Stack>
          <Stack>
            <ToolRow>
              <Slot $w={15} $ml={9}><WrapIcon /></Slot>
              <ToolText $ml={2}>Wrap Text</ToolText>
            </ToolRow>
            <ToolRow $h={21}>
              <Slot $w={15} $ml={7}><MergeIcon /></Slot>
              <ToolText $ml={4}>Merge &amp; Center</ToolText>
              <Slot $w={8} $ml={9}><Chev /></Slot>
            </ToolRow>
          </Stack>
        </GroupBody>
        <GroupLabel $launcher>Alignment</GroupLabel>
        <Launcher><LaunchIcon /></Launcher>
      </Group>

      <Group $w={156}>
        <GroupBody>
          <Stack $ml={8}>
            <ToolRow>
              <Combo $w={140}>General<Chev /></Combo>
            </ToolRow>
            <ToolRow $h={21}>
              <Slot $w={20}><DollarMark>$</DollarMark></Slot>
              <Slot $w={16}><Chev /></Slot>
              <Slot $w={26}><PercentMark>%</PercentMark></Slot>
              <Slot $w={24}><CommaIcon /></Slot>
              <ToolSep $w={6} />
              <Slot $w={17} $ml={5}>
                <DecimalBox>
                  <DecimalArrow $top={1}><LeftArrow /></DecimalArrow>
                  .0<br />.00
                </DecimalBox>
              </Slot>
              <Slot $w={17} $ml={7}>
                <DecimalBox>
                  <DecimalArrow $top={11}><RightArrow /></DecimalArrow>
                  .00<br />.0
                </DecimalBox>
              </Slot>
            </ToolRow>
          </Stack>
        </GroupBody>
        <GroupLabel $launcher>Number</GroupLabel>
        <Launcher><LaunchIcon /></Launcher>
      </Group>

      <Group $w={194}>
        <GroupBody>
          <Big $w={70} $ml={10}>
            <BigIcon><CondIcon /></BigIcon>
            <BigText>Conditional</BigText>
            <BigText>Formatting <Chev /></BigText>
          </Big>
          <Big $w={62}>
            <BigIcon $pb={6}><FormatTableIcon /></BigIcon>
            <BigText>Format as</BigText>
            <BigText>Table <Chev /></BigText>
          </Big>
          <Big $w={42}>
            <BigIcon $pb={6}><CellStyleIcon /></BigIcon>
            <BigText>Cell</BigText>
            <BigText>Styles <Chev /></BigText>
          </Big>
        </GroupBody>
        <GroupLabel>Styles</GroupLabel>
      </Group>

      <Group $w={143}>
        <GroupBody>
          <Big $w={42} $ml={7}>
            <BigIcon><InsertIcon /></BigIcon>
            <BigText>Insert</BigText>
            <BigText><Chev /></BigText>
          </Big>
          <Big $w={43}>
            <BigIcon><DeleteIcon /></BigIcon>
            <BigText>Delete</BigText>
            <BigText><Chev /></BigText>
          </Big>
          <Big $w={42}>
            <BigIcon><FormatCellsIcon /></BigIcon>
            <BigText>Format</BigText>
            <BigText><Chev /></BigText>
          </Big>
        </GroupBody>
        <GroupLabel>Cells</GroupLabel>
      </Group>

      <Group $w={143}>
        <GroupBody>
          <Stack $ml={11} $w={34} $pt={3} $gap={7}>
            <ToolRow $h={16}>
              <Slot $w={16}><SigmaIcon /></Slot>
              <Slot $w={18}><Chev /></Slot>
            </ToolRow>
            <ToolRow $h={15}>
              <Slot $w={16}><FillDownIcon /></Slot>
              <Slot $w={14}><Chev /></Slot>
            </ToolRow>
            <ToolRow $h={15}>
              <Slot $w={16}><EraserIcon /></Slot>
              <Slot $w={14}><Chev /></Slot>
            </ToolRow>
          </Stack>
          <Big $w={44}>
            <BigIcon $pb={6}>
              <SortBox>
                <div>
                  <SortLetter $blue>A</SortLetter>
                  <SortLetter>Z</SortLetter>
                </div>
                <FunnelIcon />
              </SortBox>
            </BigIcon>
            <BigText>Sort &amp;</BigText>
            <BigText>Filter <Chev /></BigText>
          </Big>
          <Big $w={44}>
            <BigIcon $pb={3}><FindIcon /></BigIcon>
            <BigText>Find &amp;</BigText>
            <BigText>Select <Chev /></BigText>
          </Big>
        </GroupBody>
        <GroupLabel>Editing</GroupLabel>
      </Group>

      <CollapseSlot>
        <Svg w={11} h={6}>
          <path d="M.5 5.500 5.500.8 10.500 5.500" stroke="#444" />
        </Svg>
      </CollapseSlot>
    </Ribbon>

    <FormulaBar>
      <NameBox>Q18<Triangle dir="down" color="#777" /></NameBox>
      <GripDots $ml={15} $mr={14} />
      <FxBox>
        <Slot $w={37}>
          <Svg w={11} h={11}>
            <path d="M.5.500l10 10M10.500.5l-10 10" stroke="#bdbdbd" strokeWidth="1.400" />
          </Svg>
        </Slot>
        <Slot $w={35}>
          <Svg w={13} h={11}>
            <path d="M1 6l4 4 7-9" stroke="#bdbdbd" strokeWidth="1.800" />
          </Svg>
        </Slot>
        <FxText>fx</FxText>
      </FxBox>
      <FormulaInput><Chev color="#666" /></FormulaInput>
    </FormulaBar>

    <SheetArea>
      <Sheet />
      <VScroll>
        <ScrollArrow><Triangle dir="up" /></ScrollArrow>
        <VThumb />
        <VTrack />
        <ScrollArrow $h={15}><Triangle dir="down" /></ScrollArrow>
      </VScroll>
    </SheetArea>

    <TabBar>
      <TabNav>
        <Triangle dir="left" color="#c8c8c8" />
        <Triangle dir="right" color="#217346" />
      </TabNav>
      <ActiveSheetTab>Project Summary</ActiveSheetTab>
      <SheetTab $w={175} $sep>CS1 - 50-Unit Residential</SheetTab>
      <SheetTab $w={143} $sep>CS1 - Detailed BOQ</SheetTab>
      <SheetTab $w={155}>CS2 - Commercial Com</SheetTab>
      <MoreTabs>...</MoreTabs>
      <AddTab><PlusIcon /></AddTab>
      <GripDots $ml={20} $mr={0} />
      <HScroll>
        <HArrow $w={14}><Triangle dir="left" /></HArrow>
        <HThumb />
        <HTrack />
        <HArrow $w={14}><Triangle dir="right" /></HArrow>
      </HScroll>
    </TabBar>

    <StatusBar>
      <span>Ready</span>
      <ViewButton $on><GridViewIcon /></ViewButton>
      <ViewButton><PageViewIcon /></ViewButton>
      <ViewButton><BreakViewIcon /></ViewButton>
      <ZoomSign $ml={4}>−</ZoomSign>
      <ZoomTrack><ZoomThumb /></ZoomTrack>
      <ZoomSign>+</ZoomSign>
      <ZoomValue>100%</ZoomValue>
    </StatusBar>
  </Page>
);

export default App;
